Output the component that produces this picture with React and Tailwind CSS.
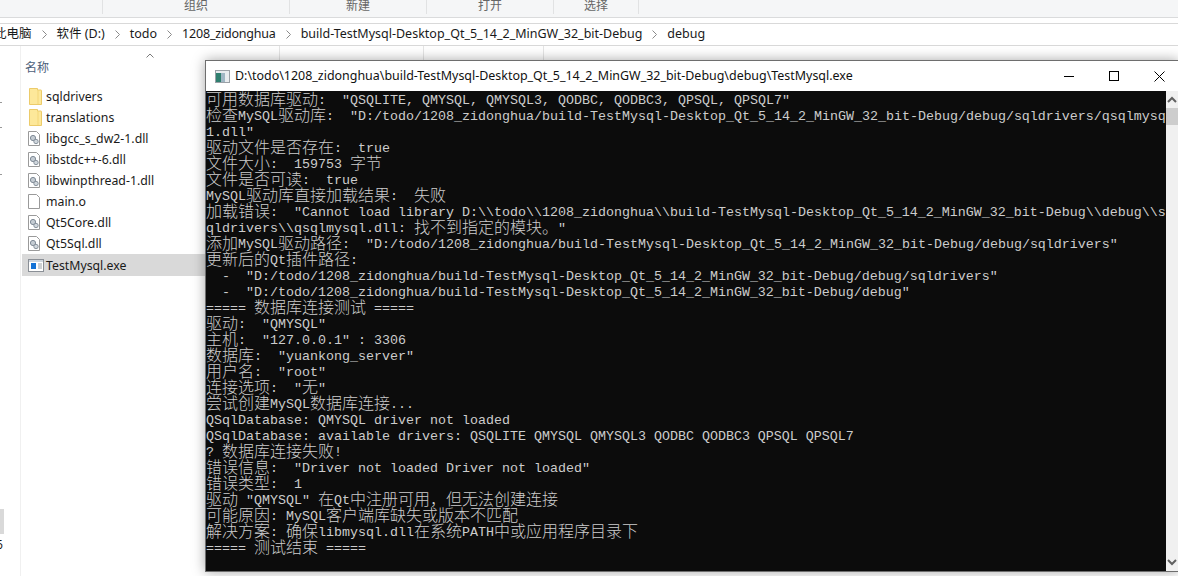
import { Fragment } from "react"

const SEGOE = "font-['Noto_Sans','Noto_Sans_CJK_SC',sans-serif]"

const ribbonGroups = [
  { label: "组织", width: "w-[187px]" },
  { label: "新建", width: "w-[137px]" },
  { label: "打开", width: "w-[127px]" },
  { label: "选择", width: "w-[85px]" },
]

const crumbs = [
  { text: "此电脑" },
  { text: "软件 (D:)" },
  { text: "todo" },
  { text: "1208_zidonghua", tight: true },
  { text: "build-TestMysql-Desktop_Qt_5_14_2_MinGW_32_bit-Debug" },
  { text: "debug" },
]

const files = [
  { name: "sqldrivers", icon: "folder" },
  { name: "translations", icon: "folder" },
  { name: "libgcc_s_dw2-1.dll", icon: "dll" },
  { name: "libstdc++-6.dll", icon: "dll" },
  { name: "libwinpthread-1.dll", icon: "dll" },
  { name: "main.o", icon: "file" },
  { name: "Qt5Core.dll", icon: "dll" },
  { name: "Qt5Sql.dll", icon: "dll" },
  { name: "TestMysql.exe", icon: "exe", selected: true },
]

const consoleLines = [
  '可用数据库驱动:  "QSQLITE, QMYSQL, QMYSQL3, QODBC, QODBC3, QPSQL, QPSQL7"',
  '检查MySQL驱动库:  "D:/todo/1208_zidonghua/build-TestMysql-Desktop_Qt_5_14_2_MinGW_32_bit-Debug/debug/sqldrivers/qsqlmysq',
  '1.dll"',
  "驱动文件是否存在:  true",
  "文件大小:  159753 字节",
  "文件是否可读:  true",
  "MySQL驱动库直接加载结果:  失败",
  '加载错误:  "Cannot load library D:\\\\todo\\\\1208_zidonghua\\\\build-TestMysql-Desktop_Qt_5_14_2_MinGW_32_bit-Debug\\\\debug\\\\s',
  'qldrivers\\\\qsqlmysql.dll: 找不到指定的模块。"',
  '添加MySQL驱动路径:  "D:/todo/1208_zidonghua/build-TestMysql-Desktop_Qt_5_14_2_MinGW_32_bit-Debug/debug/sqldrivers"',
  "更新后的Qt插件路径:",
  '  -  "D:/todo/1208_zidonghua/build-TestMysql-Desktop_Qt_5_14_2_MinGW_32_bit-Debug/debug/sqldrivers"',
  '  -  "D:/todo/1208_zidonghua/build-TestMysql-Desktop_Qt_5_14_2_MinGW_32_bit-Debug/debug"',
  "===== 数据库连接测试 =====",
  '驱动:  "QMYSQL"',
  '主机:  "127.0.0.1" : 3306',
  '数据库:  "yuankong_server"',
  '用户名:  "root"',
  '连接选项:  "无"',
  "尝试创建MySQL数据库连接...",
  "QSqlDatabase: QMYSQL driver not loaded",
  "QSqlDatabase: available drivers: QSQLITE QMYSQL QMYSQL3 QODBC QODBC3 QPSQL QPSQL7",
  "? 数据库连接失败!",
  '错误信息:  "Driver not loaded Driver not loaded"',
  "错误类型:  1",
  '驱动 "QMYSQL" 在Qt中注册可用\uff0c但无法创建连接',
  "可能原因: MySQL客户端库缺失或版本不匹配",
  "解决方案: 确保libmysql.dll在系统PATH中或应用程序目录下",
  "===== 测试结束 =====",
]

function FileIcon({ type }) {
  if (type === "folder") {
    return (
      <svg width="14" height="17" viewBox="0 0 14 17" className="shrink-0">
        <path d="M1.5 .5h8v1.5h3.5a.5.5 0 0 1 .5.5v14H1.5z" fill="#fde89a" stroke="#eccb6a" />
        <path d="M10 2v14" stroke="#f3d678" />
      </svg>
    )
  }
  if (type === "exe") {
    return (
      <svg width="16" height="13" viewBox="0 0 16 13" className="shrink-0">
        <rect x=".5" y=".5" width="15" height="12" fill="#fff" stroke="#8a8f96" />
        <rect x="1" y="1" width="14" height="2" fill="#cfd6de" />
        <rect x="3" y="4" width="5" height="6" fill="#1573d6" />
        <path d="M10 5h4M10 7h4M10 9h4" stroke="#9aa0a6" />
      </svg>
    )
  }
  return (
    <svg width="12" height="15" viewBox="0 0 12 15" className="shrink-0">
      <path d="M.5.5h8l3 3v11H.5z" fill="#fff" stroke="#9a9a9a" />
      {type === "dll" && (
        <>
          <circle cx="5" cy="7" r="2.6" fill="#c5ccd3" stroke="#7f8a96" />
          <circle cx="8" cy="10.5" r="2.2" fill="#cfd6dc" stroke="#8a949e" />
        </>
      )}
    </svg>
  )
}

// console font: CJK cells are twice the width of latin ones
// leading-[0px] keeps the CJK run from moving the baseline of the line
function ConsoleLine({ text }) {
  const parts = text.split(/([\u3000-\u9fff\uff00-\uffef]+)/)
  return (
    <div className="h-4 pt-[2px] leading-4 whitespace-pre">
      {parts.map((part, i) =>
        i % 2 === 1 ? (
          <span key={i} className="font-['Noto_Sans_CJK_SC',sans-serif] text-[16px] leading-[0px] align-[-1px] font-light">{part}</span>
        ) : (
          <Fragment key={i}>{part}</Fragment>
        )
      )}
    </div>
  )
}

function ConsoleWindow() {
  return (
    <div className="absolute left-[205px] top-[60px] w-[974px] h-[512px] bg-white border border-[#6e6e6e] shadow-[0_0_12px_rgba(0,0,0,0.35)] flex flex-col">
      <div className="h-[30px] shrink-0 flex items-center pl-[9px]">
        <svg width="15" height="13" viewBox="0 0 15 13" className="shrink-0">
          <rect x=".5" y=".5" width="14" height="12" fill="#e8ecef" stroke="#9aa0a6" />
          <rect x="1" y="3" width="5" height="9" fill="#2f7f6f" />
          <rect x="6" y="3" width="4" height="9" fill="#9fb6c4" />
        </svg>
        <span className={`ml-[5px] text-[12.45px] text-[#111] whitespace-nowrap ${SEGOE}`}>
          D:\todo\1208_zidonghua\build-TestMysql-Desktop_Qt_5_14_2_MinGW_32_bit-Debug\debug\TestMysql.exe
        </span>
        <div className="ml-auto flex items-center mr-[13px]">
          <div className="w-[10px] h-px bg-black" />
          <div className="ml-[35px] w-[10px] h-[10px] border border-black" />
          <svg width="11" height="11" viewBox="0 0 11 11" className="ml-[35px]">
            <path d="M.5.5l10 10M10.5.5l-10 10" stroke="#000" fill="none" />
          </svg>
        </div>
      </div>
      <div className="flex-1 flex min-h-0">
        <div className="w-[960px] shrink-0 bg-[#0c0c0c] text-[#cccccc] font-['Liberation_Mono',monospace] text-[13.33px] overflow-hidden">
          {consoleLines.map((line, i) => (
            <ConsoleLine key={i} text={line} />
          ))}
        </div>
        <div className="flex-1 bg-[#f0f0f0] flex flex-col items-start">
          <svg width="12" height="17" viewBox="0 0 12 17" className="shrink-0">
            <path d="M2 11l4-4 4 4" stroke="#606060" strokeWidth="2" fill="none" />
          </svg>
          <div className="w-full h-[17px] bg-[#cdcdcd]" />
          <svg width="12" height="17" viewBox="0 0 12 17" className="shrink-0 mt-auto">
            <path d="M2 6l4 4 4-4" stroke="#606060" strokeWidth="2" fill="none" />
          </svg>
        </div>
      </div>
    </div>
  )
}

export default function App() {
  return (
    <div className={`relative w-[1178px] h-[576px] overflow-hidden bg-white text-[12.5px] ${SEGOE}`}>
      {/* ribbon labels, cut off by the top of the screenshot */}
      <div className="h-[18px] bg-[#f5f6f7] border-b border-[#dadbdc] flex text-[#666] text-[12px] leading-[12px]">
        <div className="w-[103px] h-[14px] border-r border-[#e1e2e3]" />
        {ribbonGroups.map((g) => (
          <div key={g.label} className={`${g.width} h-[14px] border-r border-[#e1e2e3] flex justify-center`}>
            {g.label}
          </div>
        ))}
      </div>
      <div className="h-[6px] border-b border-[#d9d9d9]" />

      {/* address bar */}
      <div className="h-[22px] border-b border-[#d9d9d9] flex items-center gap-[10px] -ml-[6px] text-[#1a1a1a]">
        {crumbs.map((c, i) => (
          <Fragment key={c.text}>
            {i > 0 && (
              <svg width="5" height="9" viewBox="0 0 5 9" className="shrink-0">
                <path d="M.5.5l4 4-4 4" stroke="#8a8a8a" fill="none" />
              </svg>
            )}
            <span className={c.tight ? "whitespace-nowrap tracking-[-0.2px]" : "whitespace-nowrap"}>{c.text}</span>
          </Fragment>
        ))}
      </div>

      <div className="flex h-[530px]">
        {/* what is left of the navigation pane */}
        <div className="w-[21px] shrink-0 border-r border-[#f0f0f0] flex flex-col items-start">
          <div className="mt-[56px] w-[2px] h-px bg-[#999]" />
          <div className="mt-[24px] w-[2px] h-px bg-[#999]" />
          <div className="mt-[46px] w-[2px] h-px bg-[#999]" />
          <div className="mt-[334px] w-[4px] h-[25px] bg-[#d9d9d9]" />
          <div className="-ml-[4px] mt-[3px] text-[12px] leading-[16px] text-[#1a1a1a]">6</div>
        </div>

        <div className="flex-1 min-w-0">
          <div className="relative h-[40px] pl-[4px] pt-[13px]">
            <span className="text-[12px] text-[#4c607a]">名称</span>
            <svg width="8" height="5" viewBox="0 0 8 5" className="absolute left-[125px] top-[7px]">
              <path d="M.5 4.5L4 1l3.5 3.5" stroke="#7a7a7a" fill="none" />
            </svg>
            <div className="absolute left-[258px] top-0 h-[14px] w-px bg-[#e5e5e5]" />
            <div className="absolute left-[402px] top-0 h-[14px] w-px bg-[#e5e5e5]" />
            <div className="absolute left-[522px] top-0 h-[14px] w-px bg-[#e5e5e5]" />
          </div>
          <div className="ml-px w-[183px] text-[12.3px]">
            {files.map((f) => (
              <div
                key={f.name}
                className={`flex items-center pl-[6px] whitespace-nowrap text-[#1a1a1a] ${f.selected ? "h-[22px] bg-[#d9d9d9]" : "h-[21px]"}`}
              >
                <div className="w-[18px] flex justify-start">
                  <FileIcon type={f.icon} />
                </div>
                <span className="pt-[2px]">{f.name}</span>
              </div>
            ))}
          </div>
        </div>
      </div>

      <ConsoleWindow />
    </div>
  )
}
